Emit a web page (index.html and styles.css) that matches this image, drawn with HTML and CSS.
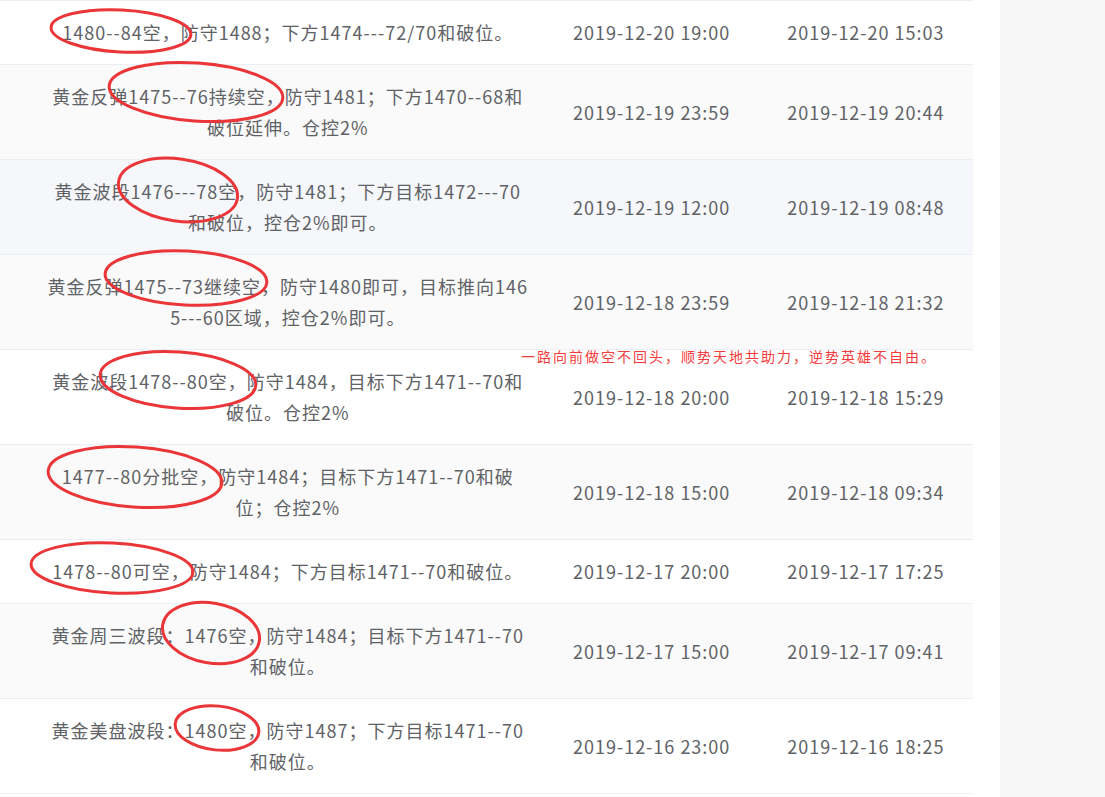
FILE: index.html
```html
<!DOCTYPE html>
<html lang="zh-CN">
<head>
  <meta charset="UTF-8">
  <title>策略记录</title>
  <link rel="stylesheet" href="styles.css">
</head>
<body>

<div class="page">
  <div class="main">
    <div class="board">
      <table class="list">
        <colgroup>
          <col class="col-text">
          <col class="col-date">
          <col class="col-date">
        </colgroup>
        <tbody>
          <tr>
            <td class="cell-text">1480--84空，防守1488；下方1474---72/70和破位。</td>
            <td>2019-12-20 19:00</td>
            <td>2019-12-20 15:03</td>
          </tr>
          <tr>
            <td class="cell-text">黄金反弹1475--76持续空，防守1481；下方1470--68和<br>破位延伸。仓控2%</td>
            <td>2019-12-19 23:59</td>
            <td>2019-12-19 20:44</td>
          </tr>
          <tr class="is-hover">
            <td class="cell-text">黄金波段1476---78空，防守1481；下方目标1472---70<br>和破位，控仓2%即可。</td>
            <td>2019-12-19 12:00</td>
            <td>2019-12-19 08:48</td>
          </tr>
          <tr>
            <td class="cell-text">黄金反弹1475--73继续空，防守1480即可，目标推向146<br>5---60区域，控仓2%即可。</td>
            <td>2019-12-18 23:59</td>
            <td>2019-12-18 21:32</td>
          </tr>
          <tr>
            <td class="cell-text">黄金波段1478--80空，防守1484，目标下方1471--70和<br>破位。仓控2%</td>
            <td>2019-12-18 20:00</td>
            <td>2019-12-18 15:29</td>
          </tr>
          <tr>
            <td class="cell-text">1477--80分批空，防守1484；目标下方1471--70和破<br>位；仓控2%</td>
            <td>2019-12-18 15:00</td>
            <td>2019-12-18 09:34</td>
          </tr>
          <tr>
            <td class="cell-text">1478--80可空，防守1484；下方目标1471--70和破位。</td>
            <td>2019-12-17 20:00</td>
            <td>2019-12-17 17:25</td>
          </tr>
          <tr>
            <td class="cell-text">黄金周三波段：1476空，防守1484；目标下方1471--70<br>和破位。</td>
            <td>2019-12-17 15:00</td>
            <td>2019-12-17 09:41</td>
          </tr>
          <tr>
            <td class="cell-text">黄金美盘波段：1480空，防守1487；下方目标1471--70<br>和破位。</td>
            <td>2019-12-16 23:00</td>
            <td>2019-12-16 18:25</td>
          </tr>
        </tbody>
      </table>

      <!-- hand-drawn marks over the entry prices -->
      <svg class="marks" width="973" height="797" viewBox="0 0 973 797">
        <ellipse cx="121" cy="31" rx="70" ry="21" transform="rotate(3 121 31)"/>
        <ellipse cx="196" cy="92" rx="87" ry="29" transform="rotate(4 196 92)"/>
        <ellipse cx="178" cy="190" rx="60" ry="31" transform="rotate(8 178 190)"/>
        <ellipse cx="186" cy="278" rx="81" ry="27" transform="rotate(3 186 278)"/>
        <ellipse cx="178" cy="380" rx="78" ry="28" transform="rotate(4 178 380)"/>
        <ellipse cx="135" cy="477" rx="87" ry="30" transform="rotate(4 135 477)"/>
        <ellipse cx="112" cy="568" rx="81" ry="25" transform="rotate(3 112 568)"/>
        <ellipse cx="211" cy="633" rx="49" ry="30" transform="rotate(10 211 633)"/>
        <ellipse cx="217" cy="728" rx="42" ry="22" transform="rotate(6 217 728)"/>
      </svg>

      <p class="slogan">一路向前做空不回头，顺势天地共助力，逆势英雄不自由。</p>
    </div>
  </div>
  <div class="aside"></div>
</div>

</body>
</html>
```

FILE: styles.css
```css
body {
  margin: 0;
  font-family: "Noto Sans CJK SC", sans-serif;
  color: #606266;
}
.page {
  display: flex;
  height: 797px;
  overflow: hidden;
}
.main {
  width: 1000px;
  background: #ffffff;
}
.aside {
  flex: 1;
  background: #f6f6f6;
}
.board {
  position: relative;
  width: 973px;
}
.list {
  width: 973px;
  border-collapse: collapse;
  table-layout: fixed;
  font-size: 18px;
  letter-spacing: 1px;
}
.col-text {
  width: 544px;
}
.col-date {
  width: 214px;
}
.list td {
  padding: 16px 0;
  line-height: 31px;
  text-align: center;
  vertical-align: middle;
  border-bottom: 1px solid #ebeef5;
  white-space: nowrap;
}
.list tr:first-child td {
  border-top: 1px solid #ebeef5;
}
.list .cell-text {
  padding-left: 31px;
}
.list tr:nth-child(even) td {
  background: #fafafa;
}
.list tr.is-hover td {
  background: #f5f7fa;
}
.marks {
  position: absolute;
  left: 0;
  top: 0;
  pointer-events: none;
}
.marks ellipse {
  fill: none;
  stroke: #ea3539;
  stroke-width: 3;
}
.slogan {
  position: absolute;
  left: 521px;
  top: 348px;
  margin: 0;
  font-size: 14px;
  line-height: 16px;
  letter-spacing: 2px;
  color: #f53c3c;
  white-space: nowrap;
}
```
